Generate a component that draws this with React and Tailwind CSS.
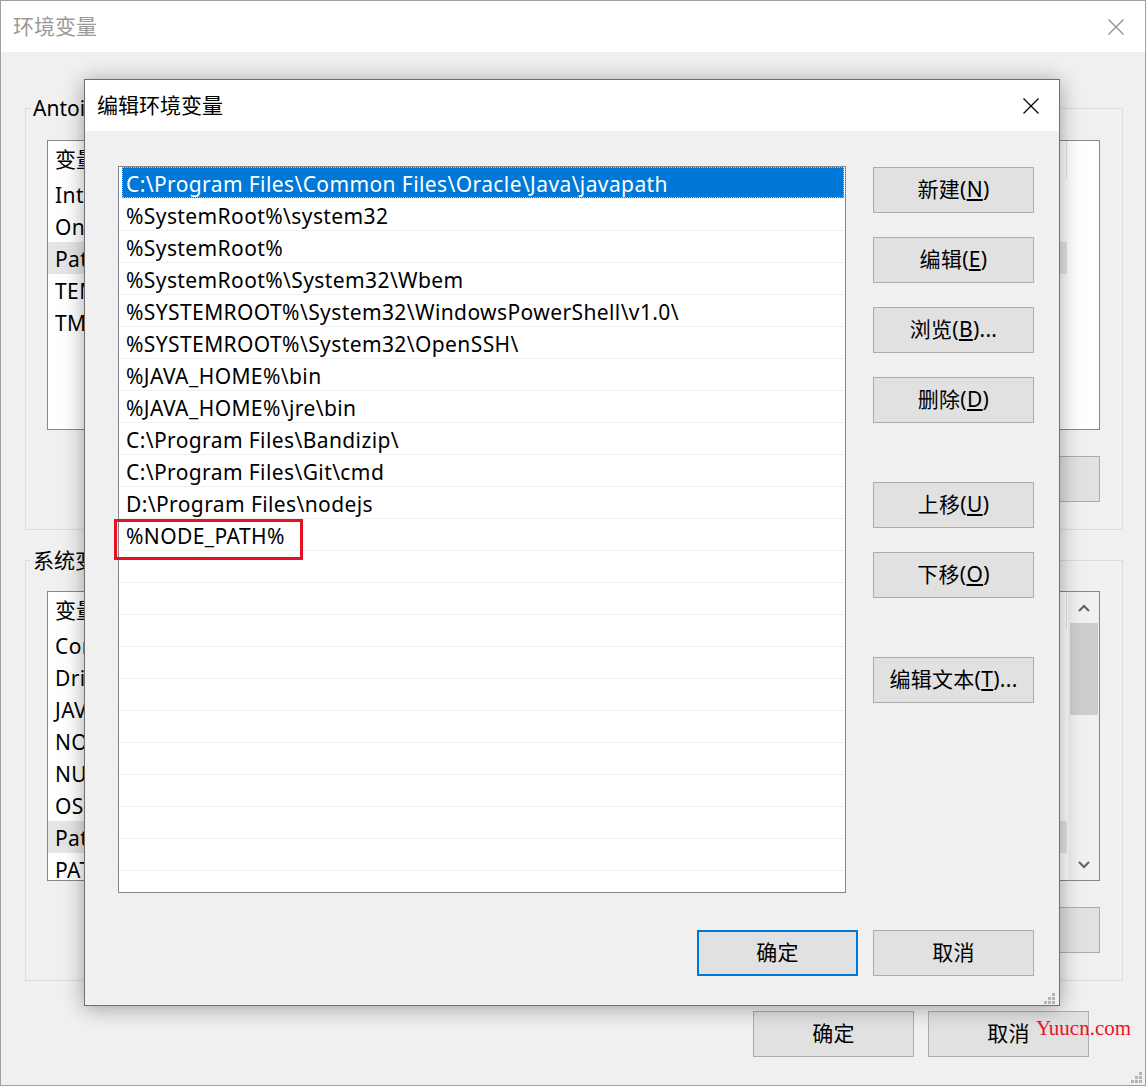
import React from "react";

const pathRows = [
  "C:\\Program Files\\Common Files\\Oracle\\Java\\javapath",
  "%SystemRoot%\\system32",
  "%SystemRoot%",
  "%SystemRoot%\\System32\\Wbem",
  "%SYSTEMROOT%\\System32\\WindowsPowerShell\\v1.0\\",
  "%SYSTEMROOT%\\System32\\OpenSSH\\",
  "%JAVA_HOME%\\bin",
  "%JAVA_HOME%\\jre\\bin",
  "C:\\Program Files\\Bandizip\\",
  "C:\\Program Files\\Git\\cmd",
  "D:\\Program Files\\nodejs",
  "%NODE_PATH%",
];

const userVars = ["IntelliJ IDEA", "OneDrive", "Path", "TEMP", "TMP"];
const sysVars = [
  "ComSpec",
  "DriverData",
  "JAVA_HOME",
  "NODE_PATH",
  "NUMBER_OF_PROCESSORS",
  "OS",
  "Path",
  "PATHEXT",
];

const CloseIcon = ({ color }) => (
  <svg width="16" height="16" viewBox="0 0 16 16">
    <path d="M0.5 0.5L15.5 15.5M15.5 0.5L0.5 15.5" stroke={color} strokeWidth="1.2" />
  </svg>
);

const Grip = () => (
  <svg width="11" height="11" viewBox="0 0 11 11">
    <rect x="8" y="0" width="3" height="3" fill="#b4b4b4" />
    <rect x="4" y="4" width="3" height="3" fill="#b4b4b4" />
    <rect x="8" y="4" width="3" height="3" fill="#b4b4b4" />
    <rect x="0" y="8" width="3" height="3" fill="#b4b4b4" />
    <rect x="4" y="8" width="3" height="3" fill="#b4b4b4" />
    <rect x="8" y="8" width="3" height="3" fill="#b4b4b4" />
  </svg>
);

const Chevron = ({ up }) => (
  <svg width="12" height="8" viewBox="0 0 12 8">
    <path
      d={up ? "M1 7L6 2L11 7" : "M1 1L6 6L11 1"}
      stroke="#606060"
      strokeWidth="2"
      fill="none"
    />
  </svg>
);

const Btn = ({ children, primary }) => (
  <div
    className={
      primary
        ? "w-[161px] h-[46px] shrink-0 bg-[#e1e1e1] border-2 border-[#0078d7] flex items-center justify-center text-[21px] tracking-[0.3px] text-black"
        : "w-[161px] h-[46px] shrink-0 bg-[#e1e1e1] border border-[#adadad] flex items-center justify-center text-[21px] tracking-[0.3px] text-black"
    }
  >
    {children}
  </div>
);

const VarList = ({ names, selected, scroll }) => (
  <div className="h-[290px] bg-white border border-[#828790] flex overflow-hidden">
    <div className="flex-1 flex flex-col">
      <div className="h-[37px] shrink-0 flex text-[21px]">
        <div className="w-[300px] pl-[7px] flex items-center border-r border-[#e5e5e5]">
          变量
        </div>
        <div className="w-[719px] pl-[7px] flex items-center border-r border-[#e5e5e5]">
          值
        </div>
      </div>
      {names.map((n) => (
        <div
          key={n}
          className={
            n === selected
              ? "h-[32px] w-[1019px] shrink-0 pl-[7px] pt-[3px] flex items-center bg-[#e5e5e5] text-[21px] tracking-[0.4px]"
              : "h-[32px] w-[1019px] shrink-0 pl-[7px] pt-[3px] flex items-center text-[21px] tracking-[0.4px]"
          }
        >
          {n}
        </div>
      ))}
    </div>
    {scroll && (
      <div className="w-[31px] shrink-0 bg-[#f0f0f0] flex flex-col items-center">
        <div className="h-[31px] flex items-center justify-center">
          <Chevron up />
        </div>
        <div className="w-[28px] h-[92px] bg-[#cdcdcd]" />
        <div className="flex-1" />
        <div className="h-[31px] flex items-center justify-center">
          <Chevron />
        </div>
      </div>
    )}
  </div>
);

const GroupBox = ({ label, children }) => (
  <fieldset className="ml-[24px] w-[1098px] border border-[#dcdcdc]">
    <legend className="ml-[5px] px-[2px] text-[21px] leading-[28px]">{label}</legend>
    <div className="pl-[21px] pr-[22px] pb-[27px]">{children}</div>
  </fieldset>
);

export default function App() {
  const emptyRows = Array.from({ length: 11 });

  return (
    <div className="relative w-[1146px] h-[1086px] bg-[#f0f0f0] border border-[#a0a0a0] overflow-hidden text-black font-['Noto_Sans','Noto_Sans_CJK_SC',sans-serif]">
      {/* outer window */}
      <div className="h-[51px] bg-white flex items-center justify-between pl-[12px] pr-[21px]">
        <span className="text-[21px] text-[#999999]">环境变量</span>
        <CloseIcon color="#8c8c8c" />
      </div>

      <div className="pt-[42px]">
        <GroupBox label="Antoine 的用户变量(U)">
          <div className="mt-[18px]">
            <VarList names={userVars} selected="Path" />
          </div>
          <div className="mt-[26px] flex justify-end gap-[15px]">
            <Btn>新建(N)...</Btn>
            <Btn>编辑(E)...</Btn>
            <Btn>删除(D)</Btn>
          </div>
        </GroupBox>

        <div className="mt-[16px]">
          <GroupBox label="系统变量(S)">
            <div className="mt-[17px]">
              <VarList names={sysVars} selected="Path" scroll />
            </div>
            <div className="mt-[26px] flex justify-end gap-[15px]">
              <Btn>新建(W)...</Btn>
              <Btn>编辑(I)...</Btn>
              <Btn>删除(L)</Btn>
            </div>
          </GroupBox>
        </div>

        <div className="mt-[30px] flex justify-end gap-[14px] pr-[56px]">
          <Btn>确定</Btn>
          <Btn>取消</Btn>
        </div>
      </div>

      <div className="absolute right-[3px] bottom-[2px]">
        <Grip />
      </div>

      <div className="absolute left-[1035px] top-[1017px] text-[21px] leading-[21px] text-[#ee1126] font-['Liberation_Serif',serif]">
        Yuucn.com
      </div>

      {/* edit dialog */}
      <div className="absolute left-[83px] top-[78px] w-[976px] h-[927px] bg-[#f0f0f0] border border-[#707070] shadow-[0_2px_20px_rgba(0,0,0,0.35)] flex flex-col">
        <div className="h-[51px] shrink-0 bg-white flex items-center justify-between pl-[12px] pr-[20px]">
          <span className="text-[21px]">编辑环境变量</span>
          <CloseIcon color="#000000" />
        </div>

        <div className="flex pl-[33px] pt-[35px] gap-[27px]">
          <div className="relative">
            <div className="w-[728px] h-[727px] bg-white border border-[#828790] overflow-hidden flex flex-col">
              {pathRows.map((p, i) => (
                <div
                  key={p}
                  className="h-[32px] shrink-0 flex border-b border-[#f0f0f0] pl-[3px] pr-[1px]"
                >
                  <div
                    className={
                      i === 0
                        ? "flex-1 pl-[4px] pt-[4px] flex items-center bg-[#0078d7] text-white text-[21px] tracking-[0.4px] whitespace-nowrap outline-1 outline-dotted outline-[#9cc8f0] -outline-offset-1"
                        : "flex-1 pl-[4px] pt-[4px] flex items-center text-[21px] tracking-[0.4px] whitespace-nowrap"
                    }
                  >
                    {p}
                  </div>
                </div>
              ))}
              {emptyRows.map((_, i) => (
                <div key={i} className="h-[32px] shrink-0 border-b border-[#f0f0f0]" />
              ))}
            </div>
            <div className="absolute left-[-4px] top-[353px] w-[189px] h-[41px] border-[3px] border-[#e81123]" />
          </div>

          <div className="flex flex-col pt-[1px]">
            <Btn>
              新建(<span className="underline underline-offset-2">N</span>)
            </Btn>
            <div className="mt-[24px]">
              <Btn>
                编辑(<span className="underline underline-offset-2">E</span>)
              </Btn>
            </div>
            <div className="mt-[24px]">
              <Btn>
                浏览(<span className="underline underline-offset-2">B</span>)...
              </Btn>
            </div>
            <div className="mt-[24px]">
              <Btn>
                删除(<span className="underline underline-offset-2">D</span>)
              </Btn>
            </div>
            <div className="mt-[59px]">
              <Btn>
                上移(<span className="underline underline-offset-2">U</span>)
              </Btn>
            </div>
            <div className="mt-[24px]">
              <Btn>
                下移(<span className="underline underline-offset-2">O</span>)
              </Btn>
            </div>
            <div className="mt-[59px]">
              <Btn>
                编辑文本(<span className="underline underline-offset-2">T</span>)...
              </Btn>
            </div>
          </div>
        </div>

        <div className="mt-[37px] flex justify-end gap-[15px] pr-[25px]">
          <Btn primary>确定</Btn>
          <Btn>取消</Btn>
        </div>

        <div className="absolute right-[4px] bottom-[1px]">
          <Grip />
        </div>
      </div>
    </div>
  );
}
